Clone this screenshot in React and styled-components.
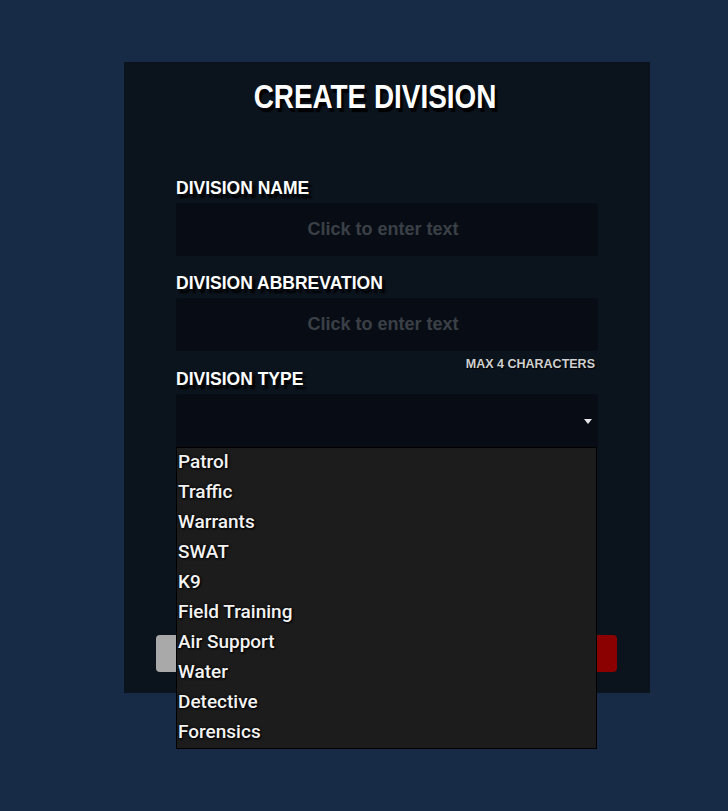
import React from "react";
import styled, { createGlobalStyle } from "styled-components";

const Global = createGlobalStyle`
  html, body { margin: 0; padding: 0; background: #172a46; }
  body { font-family: "Liberation Sans", Arial, sans-serif; }
  #root { min-height: 811px; }
`;

const Page = styled.div`
  padding: 62px 0 0 124px;
  min-height: 811px;
  box-sizing: border-box;
`;

const Card = styled.div`
  width: 526px;
  height: 631px;
  background: #0b131d;
  box-sizing: border-box;
  padding: 14px 0 21px;
  display: flex;
  flex-direction: column;
`;

const Title = styled.h1`
  margin: 0 24px 0 0;
  text-align: center;
  font-family: "Liberation Sans", sans-serif;
  font-weight: 700;
  font-size: 34px;
  line-height: 40px;
  color: #ffffff;
  span {
    display: inline-block;
    transform: scaleX(0.82);
    text-shadow: 3px 4px 1px #000;
  }
`;

const Form = styled.div`
  padding: 0 52px;
  margin-top: 62px;
  display: flex;
  flex-direction: column;
`;

const Field = styled.div`
  display: flex;
  flex-direction: column;
  margin-bottom: ${(p) => p.$gap || 0}px;
  position: relative;
`;

const Label = styled.label`
  font-family: "Liberation Sans", sans-serif;
  font-weight: 700;
  font-size: 17.5px;
  line-height: 20px;
  color: #fff;
  text-shadow: 3px 4px 2px #000;
  margin-bottom: 5px;
`;

const Input = styled.div`
  height: 53px;
  background: #080d15;
  border-radius: 3px;
  display: flex;
  align-items: center;
  justify-content: center;
  padding-right: 8px;
  font-family: "Liberation Sans", sans-serif;
  font-weight: 700;
  font-size: 18px;
  color: #3a4046;
`;

const Hint = styled.div`
  align-self: flex-end;
  margin: 6px 3px -2px 0;
  font-family: "Liberation Sans", sans-serif;
  font-weight: 700;
  font-size: 12.5px;
  line-height: 14px;
  color: #d0d0d0;
  text-shadow: 1px 1px 1px #000;
`;

const Select = styled.div`
  height: 53px;
  background: #080d15;
  border-radius: 3px 3px 0 0;
  display: flex;
  align-items: center;
  justify-content: flex-end;
  padding-right: 6px;
`;

const Caret = styled.span`
  width: 0;
  height: 0;
  border-left: 4px solid transparent;
  border-right: 4px solid transparent;
  border-top: 5px solid #e6e6e6;
  margin-top: 2px;
`;

const Menu = styled.ul`
  position: absolute;
  top: 100%;
  left: 0;
  right: 1px;
  margin: 0;
  padding: 0;
  list-style: none;
  background: #1c1c1c;
  border: 1px solid #000;
  z-index: 10;
`;

const Option = styled.li`
  height: 30px;
  line-height: 28px;
  padding-left: 1px;
  font-family: Roboto, "Liberation Sans", sans-serif;
  font-weight: 500;
  font-size: 19px;
  color: #f2f2f2;
  text-shadow: 0 0 3px #000, 1px 1px 2px #000;
`;

const Buttons = styled.div`
  margin-top: auto;
  padding: 0 33px 0 32px;
  display: flex;
  justify-content: space-between;
`;

const Button = styled.button`
  width: 130px;
  height: 37px;
  border: none;
  border-radius: 4px;
  background: ${(p) => p.$bg};
`;

const types = [
  "Patrol",
  "Traffic",
  "Warrants",
  "SWAT",
  "K9",
  "Field Training",
  "Air Support",
  "Water",
  "Detective",
  "Forensics",
];

export default function App() {
  return (
    <>
      <Global />
      <Page>
        <Card>
          <Title>
            <span>CREATE DIVISION</span>
          </Title>
          <Form>
            <Field $gap={17}>
              <Label>DIVISION NAME</Label>
              <Input>Click to enter text</Input>
            </Field>
            <Field>
              <Label>DIVISION ABBREVATION</Label>
              <Input>Click to enter text</Input>
              <Hint>MAX 4 CHARACTERS</Hint>
            </Field>
            <Field>
              <Label>DIVISION TYPE</Label>
              <Select>
                <Caret />
              </Select>
              <Menu>
                {types.map((t) => (
                  <Option key={t}>{t}</Option>
                ))}
              </Menu>
            </Field>
          </Form>
          <Buttons>
            <Button $bg="#a9a9a9" aria-label="Cancel" />
            <Button $bg="#8b0000" aria-label="Create" />
          </Buttons>
        </Card>
      </Page>
    </>
  );
}
